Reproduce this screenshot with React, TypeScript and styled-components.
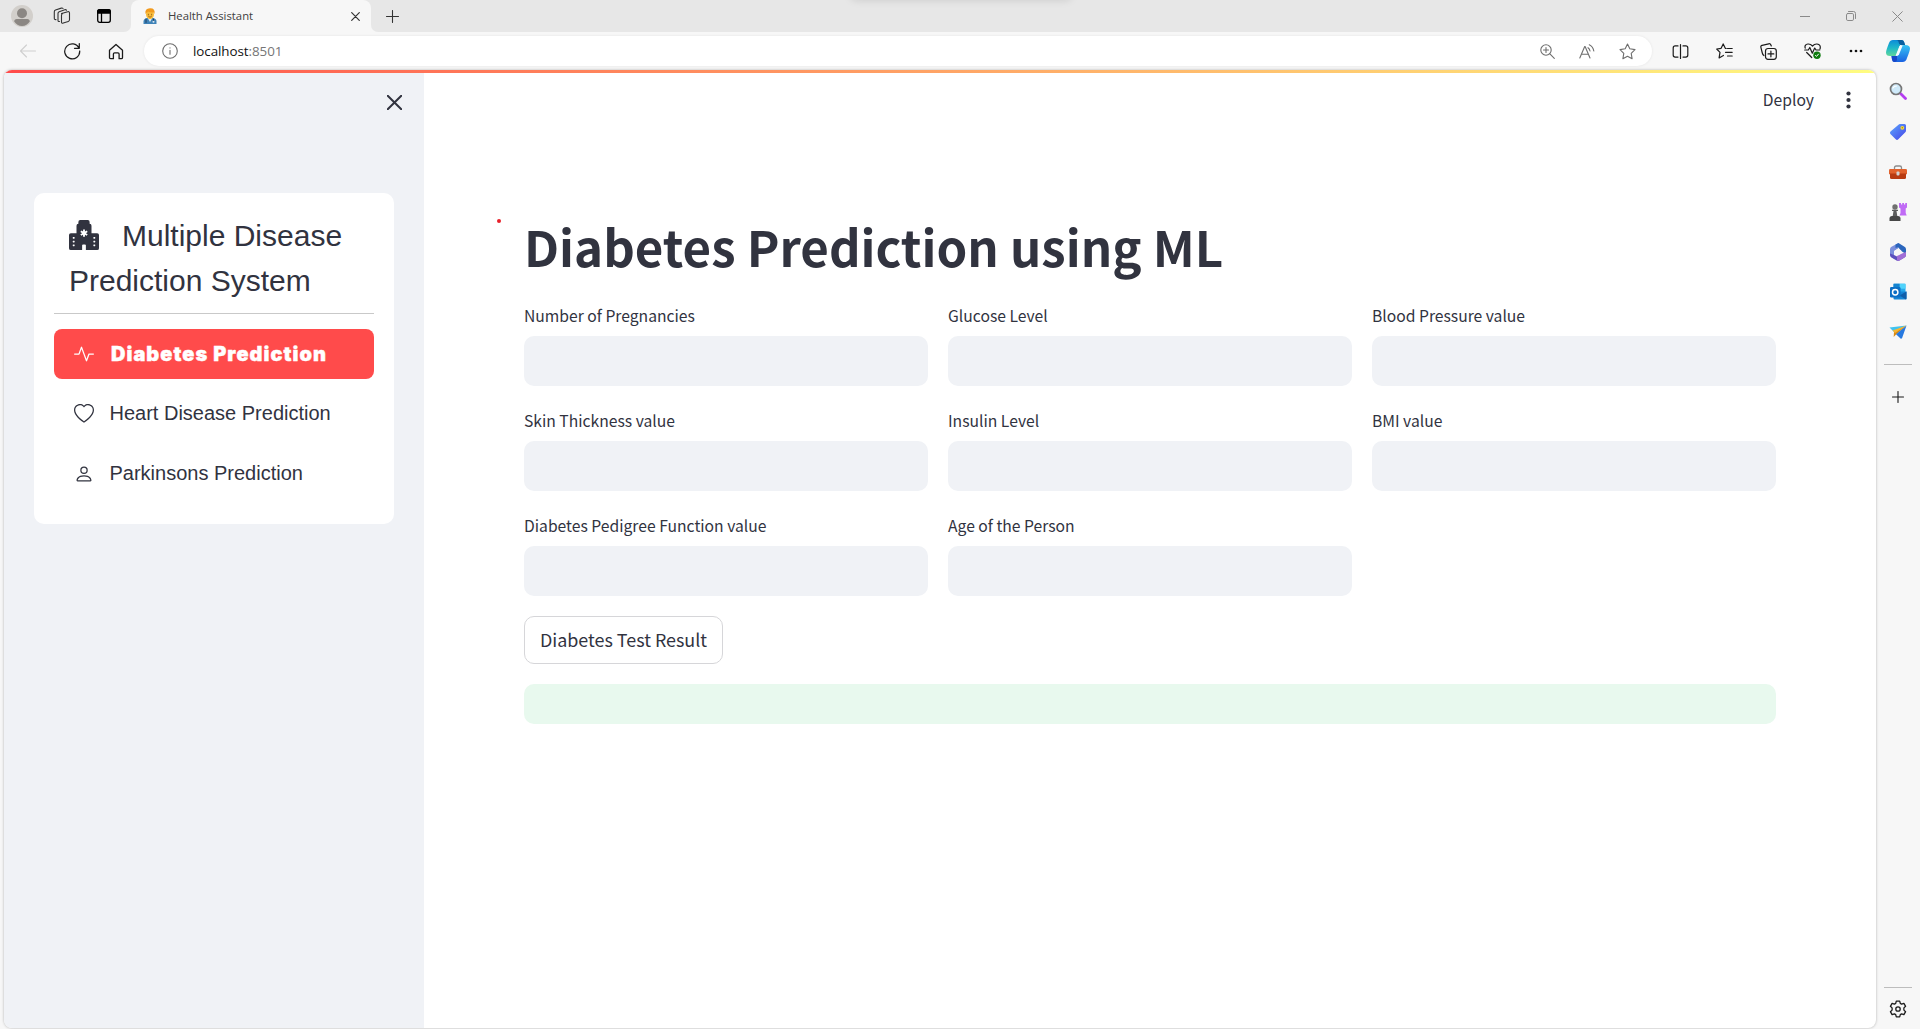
import React from "react";
import styled, { createGlobalStyle } from "styled-components";
import { BsActivity, BsHeart, BsHospitalFill, BsPerson } from "react-icons/bs";

const SANS = `"Noto Sans CJK SC", "Noto Sans", sans-serif`;
const SYSTEM = `"Open Sans", "Noto Sans", sans-serif`;
const ARIAL = `"Liberation Sans", Arial, sans-serif`;

const GlobalStyle = createGlobalStyle`
  *, *::before, *::after { box-sizing: border-box; }
  html, body { margin: 0; height: 100%; background: #f7f7f7; overflow: hidden; }
  button, input { font: inherit; }
`;

/* ---------- browser frame ---------- */

const Window = styled.div`
  display: flex;
  flex-direction: column;
  width: 100vw;
  height: 100vh;
  background: #f7f7f7;
  font-family: ${SYSTEM};
  overflow: hidden;
`;

const TabStrip = styled.header`
  display: flex;
  height: 32px;
  flex: none;
`;

const StripStart = styled.div`
  display: flex;
  align-items: center;
  width: 131px;
  background: #e7e7e7;
  border-bottom-right-radius: 7px;
`;

const StripEnd = styled.div`
  position: relative;
  display: flex;
  flex: 1;
  align-items: center;
  background: #e7e7e7;
  border-bottom-left-radius: 7px;
  overflow: hidden;
`;

const TopShadow = styled.div`
  position: absolute;
  top: -11px;
  left: 481px;
  width: 218px;
  height: 10px;
  border-radius: 4px;
  box-shadow: 0 0 8px 1px rgba(0, 0, 0, 0.13);
`;

const TabSlot = styled.div`
  width: 240px;
  background: linear-gradient(#e7e7e7 50%, #f7f7f7 50%);
`;

const Tab = styled.div`
  display: flex;
  align-items: center;
  height: 32px;
  padding: 0 8px 0 12px;
  border-radius: 8px 8px 0 0;
  background: #f7f7f7;
`;

const TabTitle = styled.span`
  flex: 1;
  margin-left: 11px;
  font-size: 11.3px;
  line-height: 16px;
  color: #404040;
  white-space: nowrap;
`;

const Slot = styled.span<{ $w?: number; $h?: number }>`
  display: flex;
  flex: none;
  align-items: center;
  justify-content: center;
  width: ${({ $w = 44 }) => $w}px;
  height: ${({ $h = 32 }) => $h}px;
`;

const Grow = styled.div`
  flex: 1;
`;

const Toolbar = styled.div`
  display: flex;
  flex: none;
  align-items: center;
  height: 38px;
  padding: 0 2px 0 6px;
`;

const AddressBar = styled.div`
  display: flex;
  flex: 1;
  align-items: center;
  height: 30px;
  margin: 0 6px;
  padding: 0 5px 0 6px;
  border-radius: 15px;
  background: #fff;
  box-shadow: 0 0 3px rgba(0, 0, 0, 0.08);
`;

const Address = styled.span`
  flex: 1;
  margin-left: 3px;
  font-size: 13.4px;
  line-height: 20px;
  letter-spacing: -0.06px;
  color: #111;
`;

const Port = styled.span`
  color: #767676;
`;

const Body = styled.div`
  display: flex;
  flex: 1;
  min-height: 0;
`;

const Rail = styled.aside`
  display: flex;
  flex-direction: column;
  align-items: center;
  width: 44px;
  padding: 2px 1px 0 0;
`;

const RailRule = styled.div<{ $top: number }>`
  width: 28px;
  height: 1px;
  margin-top: ${({ $top }) => $top}px;
  background: #bdbdbd;
`;

/* ---------- page ---------- */

const Page = styled.div`
  position: relative;
  display: flex;
  flex: 1;
  margin: 0 0 1px 4px;
  border-radius: 8px;
  background: #fff;
  box-shadow: 0 0 3px rgba(0, 0, 0, 0.28);
  overflow: hidden;
`;

const Decoration = styled.div`
  position: absolute;
  inset: 0 0 auto;
  height: 3px;
  background: linear-gradient(90deg, #ff4b4b, #fffd80);
`;

const Sidebar = styled.nav`
  width: 420px;
  padding: 22px 30px;
  background: #f0f2f6;
`;

const SidebarTop = styled.div`
  display: flex;
  justify-content: flex-end;
  height: 101px;
`;

const Menu = styled.div`
  height: 331px;
  padding: 20px;
  border-radius: 10px;
  background: #fff;
  font-family: ${ARIAL};
  color: #31333f;
`;

const MenuTitle = styled.div`
  padding: 0 15px;
  height: 100px;
  font-size: 30px;
  line-height: 45px;
  white-space: nowrap;

  svg {
    margin-right: 23px;
    vertical-align: -4px;
  }
`;

const MenuRule = styled.div`
  height: 1px;
  margin-bottom: 15px;
  background: #c9c9c9;
`;

const MenuItem = styled.a<{ $active?: boolean }>`
  display: flex;
  align-items: center;
  gap: ${({ $active }) => ($active ? 17 : 15.5)}px;
  height: 50px;
  margin-bottom: 10px;
  padding: 0 20px ${({ $active }) => ($active ? 0 : 1)}px;
  border-radius: 8px;
  background: ${({ $active }) => ($active ? "#ff4b4b" : "transparent")};
  color: ${({ $active }) => ($active ? "#fff" : "#31333f")};
  font-family: ${({ $active }) => ($active ? `Inter, ${ARIAL}` : ARIAL)};
  font-size: 20px;
  font-weight: ${({ $active }) => ($active ? 900 : 400)};
  letter-spacing: ${({ $active }) => ($active ? "1.02px" : "normal")};
  -webkit-text-stroke: ${({ $active }) => ($active ? "0.4px #fff" : "0")};
  white-space: nowrap;
`;

const Main = styled.main`
  flex: 1;
  font-family: ${SANS};
  color: #31333f;
`;

const AppHeader = styled.div`
  display: flex;
  align-items: center;
  justify-content: flex-end;
  height: 60px;
  padding-right: 25px;
  font-size: 15.65px;
`;

const Deploy = styled.span`
  margin-right: 32px;
  padding-bottom: 2px;
`;

const Content = styled.div`
  padding: 83px 100px 0;
`;

const Title = styled.h1`
  position: relative;
  margin: 0 0 22px;
  font-size: 49.2px;
  font-weight: 700;
  line-height: 66px;
  white-space: nowrap;
`;

const RedDot = styled.span`
  position: absolute;
  left: -27px;
  top: 6px;
  width: 4px;
  height: 4px;
  border-radius: 50%;
  background: #e8202a;
`;

const Fields = styled.div`
  display: grid;
  grid-template-columns: repeat(3, 1fr);
  column-gap: 20px;
  row-gap: 20px;
`;

const Field = styled.label`
  display: flex;
  flex-direction: column;
  height: 85px;
`;

const FieldLabel = styled.span`
  height: 35px;
  font-size: 15.68px;
  line-height: 30px;
`;

const Input = styled.input`
  width: 100%;
  height: 50px;
  border: 0;
  border-radius: 10px;
  background: #f0f2f6;
  outline: none;
`;

const ResultButton = styled.button`
  display: block;
  width: 199px;
  height: 48px;
  margin: 20px 0;
  padding: 0 0 3px;
  border: 1px solid #d6d6d9;
  border-radius: 10px;
  background: #fff;
  color: #31333f;
  font-size: 17.92px;
  white-space: nowrap;
`;

const Success = styled.div`
  height: 40px;
  border-radius: 10px;
  background: #e8f9ee;
`;

/* ---------- icons ---------- */

type IconProps = { w?: number; h?: number; stroke?: string; sw?: number; children: React.ReactNode };

const Icon = ({ w = 20, h = w, stroke = "#1b1b1b", sw = 1.2, children }: IconProps) => (
  <svg
    width={w}
    height={h}
    viewBox={`0 0 ${w} ${h}`}
    fill="none"
    stroke={stroke}
    strokeWidth={sw}
    strokeLinecap="round"
    strokeLinejoin="round"
  >
    {children}
  </svg>
);

const Avatar = () => (
  <Icon w={22} stroke="none">
    <circle cx="11" cy="11" r="11" fill="#d2cfcb" />
    <circle cx="11" cy="8.2" r="5" fill="#8b8783" />
    <path d="M3.200 16.500c0-1.600 1-2.500 2.500-2.500h10.600c1.500 0 2.500.9 2.500 2.500-1.700 2.700-4.500 4.500-7.800 4.500s-6.100-1.800-7.800-4.500Z" fill="#8b8783" />
  </Icon>
);

const Workspaces = () => (
  <Icon w={18} sw={1.1} stroke="#333">
    <path d="M8.500 6.500 14.800 4.700q1.700-.4 1.700 1.300v6.800q0 1.200-1.200 1.600l-5 1.700q-1.800.6-1.800-1.100V8.300q0-1.400 1.200-1.800Z" />
    <path d="M6.500 14.500q-1.500.3-1.500-1.300V6.500q0-1.400 1.200-1.800l5.600-1.900q1.200-.4 1.700.4" />
    <path d="M3 12.600q-1.700.2-1.700-1.400V4.700q0-1.400 1.200-1.800L8.300 1.100q1.200-.3 1.700.4" />
  </Icon>
);

const VerticalTabs = () => (
  <Icon w={14} stroke="#000" sw={1.3}>
    <rect x=".7" y=".7" width="12.600" height="12.600" rx="2" />
    <path d="M.7 4V2.500Q.7.7 2.500.7h9q1.800 0 1.800 1.800V4Z" fill="#000" />
    <path d="M4.500 4v9.300" />
  </Icon>
);

const Doctor = () => (
  <Icon w={14} h={16} stroke="none">
    <path d="M.5 16v-2.500Q.5 10.500 4 10h6q3.500.5 3.500 3.500V16Z" fill="#3f83b8" />
    <path d="m4.700 10 2.300 4 2.300-4Z" fill="#e8f1f5" />
    <ellipse cx="7" cy="6.500" rx="4" ry="4.700" fill="#f9bd3b" />
    <path d="M2.500 6Q1.500.5 7 .3T11.500 6l-1-1.500Q7 4.500 5 3.500L3.500 5Z" fill="#f29a1d" />
    <path d="M5.400 6.200v.8M8.600 6.200v.8M5.700 8.800q1.300.8 2.600 0" stroke="#7a4a12" strokeWidth=".7" />
    <path d="M3 11v3.500M10.500 11v2" stroke="#203f63" strokeWidth="1" />
    <circle cx="10.500" cy="13.800" r="1" fill="#d9e5ee" />
  </Icon>
);

const Cross = ({ size = 9, stroke = "#333", sw = 1.2 }) => (
  <Icon w={size} stroke={stroke} sw={sw}>
    <path d={`M.7.7 ${size - 0.7} ${size - 0.7}M${size - 0.7}.7.7 ${size - 0.7}`} />
  </Icon>
);

const Plus = ({ size = 13, stroke = "#333" }) => (
  <Icon w={size} stroke={stroke} sw={1.1}>
    <path d={`M${size / 2} .5V${size - 0.5}M.5 ${size / 2}H${size - 0.5}`} />
  </Icon>
);

const Restore = () => (
  <Icon w={10} stroke="#8a8a8a" sw={1}>
    <rect x=".5" y="2.500" width="7" height="7" rx="1.300" />
    <path d="M2.500.5H7.500q2 0 2 2v5" />
  </Icon>
);

const Back = () => (
  <Icon w={18} h={14} stroke="#cfcfcf" sw={1.1}>
    <path d="M7.500 1 1.500 7l6 6M1.700 7H16.500" />
  </Icon>
);

const Refresh = () => (
  <Icon w={18} stroke="#1b1b1b" sw={1.25}>
    <path d="M16 6.200A7.500 7.500 0 1 0 16.700 9M16.300 1.500v4.800h-4.800" />
  </Icon>
);

const Home = () => (
  <Icon w={16} h={17} sw={1.3}>
    <path d="M1.500 7.300 8 1.500l6.500 5.800v7.200q0 1.200-1.200 1.200h-2.200V11q0-1.200-1.200-1.200H6.600q-1.200 0-1.200 1.200v4.700H2.700q-1.200 0-1.200-1.200Z" />
  </Icon>
);

const Info = () => (
  <Icon w={16} stroke="#6e6e6e" sw={1.1}>
    <circle cx="8" cy="8" r="7.300" />
    <path d="M8 7.300v4M8 4.800v.1" />
  </Icon>
);

const ZoomIn = () => (
  <Icon w={15} stroke="#6e6e6e" sw={1.1}>
    <circle cx="6" cy="6" r="5.200" />
    <path d="m9.900 9.900 4.400 4.400M6 3.500v5M3.500 6h5" />
  </Icon>
);

const ReadAloud = () => (
  <Icon w={16} h={15} stroke="#6e6e6e" sw={1.1}>
    <path d="M.8 14 5.700 2.500h.4L11 14M2.500 10.200h6.800M9 3.700q1.700 1 2 3.300M10.300.8q3.800 1.900 4.500 6.200" />
  </Icon>
);

const Star = () => (
  <Icon w={17} stroke="#6e6e6e" sw={1.1}>
    <path d="m8.500 1 2.300 4.800 5.200.8-3.800 3.700.9 5.400-4.600-2.500-4.600 2.500.9-5.400L1 6.600l5.200-.8Z" />
  </Icon>
);

const SplitScreen = () => (
  <Icon w={17} h={15} sw={1.2}>
    <path d="M8.500.6v13.800M6 1.900H3.200Q1.200 1.900 1.200 3.900v7.200q0 2 2 2H6M11 1.900h2.800q2 0 2 2v7.200q0 2-2 2H11" />
  </Icon>
);

const Favorites = () => (
  <Icon w={17} h={16} sw={1.2}>
    <path d="M10.300 5.500 9.300 5.300 7.200.9 5.100 5.300.7 6 4 9.300l-.9 5.600 4.300-2.500M11.500 5.500h4.700M9.500 9.300h6.700M11.500 13h4.700" />
  </Icon>
);

const Collections = () => (
  <Icon w={17} sw={1.2}>
    <rect x="5.500" y="5.500" width="10.800" height="10.800" rx="2.500" />
    <path d="M10.900 8v5.800M8 10.900h5.800M3.900 12.500Q2.700 11.700 2.300 10L.9 4.300q-.4-1.600 1.200-2L8.700.8q1.600-.4 2.200 1.200l.4 1" />
  </Icon>
);

const Essentials = () => (
  <Icon w={17} h={16} sw={1.2}>
    <path d="M1.200 5.200Q.2 1.500 4 1q2.500-.2 4.500 2 2-2.200 4.500-2 4.200.5 3 5M2.700 9.500l5 5M.7 7h3.600l1.500-2.500 2.500 5.700L10.700 5 12 7h3.700" />
    <circle cx="13" cy="12.200" r="3.700" fill="#107c10" stroke="none" />
    <path d="m11.500 12.500 1 .9 2-2.300" stroke="#fff" strokeWidth="1" />
  </Icon>
);

const Dots = () => (
  <Icon w={14} h={4} stroke="none">
    {[2, 7, 12].map((x) => (
      <circle key={x} cx={x} cy="2" r="1.350" fill="#111" />
    ))}
  </Icon>
);

const Copilot = () => (
  <Icon w={24} stroke="none">
    <defs>
      <linearGradient id="cpA" x1="0" y1="0" x2="0" y2="1">
        <stop offset="0" stopColor="#0c8bd9" />
        <stop offset=".5" stopColor="#1fb8c8" />
        <stop offset="1" stopColor="#5fd79b" />
      </linearGradient>
      <linearGradient id="cpB" x1="0" y1="0" x2="0" y2="1">
        <stop offset="0" stopColor="#35c4f4" />
        <stop offset="1" stopColor="#1a62e2" />
      </linearGradient>
    </defs>
    <path d="M7 1h8.500q2 0 2.600 2l1 3h-5L10 17H4Q0 17 0 13.500q0-2 3-9.500Q4 1 7 1Z" fill="url(#cpA)" />
    <path d="M10 1h5.500q2 0 2.600 2l1 3h-4.500q-2-1-2-3T10 1Z" fill="#0a5f9f" />
    <path d="M18 6q6-.5 6 3.500 0 2-3 9.500Q20 23 16.500 23H8.500Q6.500 23 6 20.500L5.500 17H9q2 0 2.700-2L14 8.500Q15 6 18 6Z" fill="url(#cpB)" />
    <path d="M5.500 17H9q1.500 0 2-1v4q0 3-2.500 3-2 0-2.500-2.500Z" fill="#1747c8" />
    <path d="M13.500 7h3L13 15.500q-.7 1.500-3.500 1.500Z" fill="#f6fbff" />
  </Icon>
);

const Search = () => (
  <Icon w={18} h={20} stroke="none">
    <path d="m11.500 11.500 5 5" stroke="#b43df0" strokeWidth="2.800" />
    <circle cx="7" cy="7" r="5.500" fill="#cfeafa" stroke="#777" strokeWidth="1.700" />
    <path d="M4 6Q5 4 7.500 4" stroke="#fff" strokeWidth="1.200" />
  </Icon>
);

const Tag = () => (
  <Icon w={18} stroke="none">
    <defs>
      <linearGradient id="tagFill" x1="0" y1="0" x2="1" y2="1">
        <stop offset="0" stopColor="#5ca9ff" />
        <stop offset="1" stopColor="#4743e6" />
      </linearGradient>
    </defs>
    <path d="M9.500 1.700Q10 1 11 1h4.500Q17 1 17 2.500v5q0 1-.7 1.700l-7 7.100q-1.300 1.300-2.600 0L1.400 11q-1-1.300.1-2.500Z" fill="url(#tagFill)" />
    <circle cx="13.300" cy="4.800" r="1.900" fill="#fbdc35" />
    <circle cx="13.300" cy="4.800" r=".7" fill="#9c8423" />
  </Icon>
);

const Toolbox = () => (
  <Icon w={18} h={16} stroke="none">
    <path d="M5.500 5.500V3.700Q5.500 2 7.200 2h3.600q1.700 0 1.700 1.700v1.800" stroke="#8c8c8c" strokeWidth="1.300" />
    <rect x="0" y="5" width="18" height="5.500" rx="1.300" fill="#e1622d" />
    <path d="M1 9.500h16v4q0 1.500-1.500 1.500h-13Q1 15 1 13.500Z" fill="#b83b12" />
    <rect x="7.500" y="7.500" width="3" height="4" rx="1" fill="#d3d3d3" />
  </Icon>
);

const Chess = () => (
  <Icon w={18} stroke="none">
    <path d="M10 0h2v1.500h1.200V0h1.800v1.500h1.200V0H18v4.500l-1.300 1V10l1 2.500h-7.200l1-2.500V5.500L10 4.500Z" fill="#c06bf5" />
    <circle cx="6" cy="4" r="2.700" fill="#707070" />
    <path d="M3 6.800h6v1.300H7.500l.8 4.900H3.700l.8-4.900H3Z" fill="#5d5d5d" />
    <path d="M.5 15.500Q.5 13 3 13h6q2.500 0 2.500 2.500V18H.5Z" fill="#474747" />
  </Icon>
);

const Office = () => (
  <Icon w={18} stroke="none">
    <path d="M9.500 0 2.500 3.700Q1 4.600 1 6.300v5.400q0 1.700 1.500 2.600l2.500 1.200V8l4-2.500Z" fill="#7b8fdc" />
    <path d="M1 10.500 5 12l4 2 8-5v3q0 1.700-1.500 2.500l-5 3q-1.500.9-3 0l-5-3Q1 13.500 1 11.700Z" fill="#5b4fbd" />
    <path d="M9.500 0 15.500 3.700Q17 4.600 17 6.300V11l-4-2.500-4-4.300L6.500 5V1.500Z" fill="#2b66bd" />
    <path d="m13 10.500 4-1.500v3q0 1.700-1.500 2.500l-5 3q-1.500.5-2.500 0V13Z" fill="#a06fd6" />
    <path d="m9 5.700 3.200 1.800v3L9 12.300l-3.200-1.800v-3Z" fill="#f7f7f7" />
  </Icon>
);

const Outlook = () => (
  <Icon w={18} stroke="none">
    <rect x="4.500" y=".7" width="12" height="12" rx="1" fill="#28a8ea" />
    <path d="M10.500.7h6v5h-6Z" fill="#50d3fb" />
    <path d="M4.500.7h6v5h-6Z" fill="#1483d0" />
    <path d="M4.500 8.500h13v7q0 1-1 1H5.500q-1 0-1-1Z" fill="#1686d6" />
    <path d="m17.500 8.500-7 4 6.500 4q.5-.3.500-1Z" fill="#115ea9" />
    <rect x="1" y="4" width="10.500" height="10.500" rx="1.200" fill="#0c6fc5" />
    <circle cx="6.200" cy="9.200" r="2.700" stroke="#fff" strokeWidth="1.500" />
  </Icon>
);

const Plane = () => (
  <Icon w={18} h={14} stroke="none">
    <path d="M17.500.5.500 2.500 5 7Z" fill="#3fc3f0" />
    <path d="M17.500.5 5 7l-.3 5 2.300-2.500Z" fill="#d98a12" />
    <path d="M17.500.5 7 9.300l4.500 4.200q1 .6 1.600-.6Z" fill="#2779e0" />
    <path d="M17.500.5 3.500 5.500 6 8Z" fill="#f3b436" />
  </Icon>
);

const Gear = () => (
  <Icon w={18} sw={1.3}>
    <path d="M7.300 1.100h3.400l.6 2.300 1.300.7 2.300-.7 1.700 2.900-1.700 1.600v2.200l1.700 1.600-1.700 2.900-2.300-.7-1.300.7-.6 2.300H7.300l-.6-2.300-1.300-.7-2.300.7-1.700-2.900 1.700-1.600V7.900L1.400 6.300l1.700-2.900 2.300.7 1.300-.7Z" />
    <circle cx="9" cy="9" r="2.200" />
  </Icon>
);

const Kebab = () => (
  <Icon w={5} h={18} stroke="none">
    {[2.5, 9, 15.5].map((y) => (
      <circle key={y} cx="2.500" cy={y} r="2.100" fill="#31333f" />
    ))}
  </Icon>
);

/* ---------- data ---------- */

const fields = [
  "Number of Pregnancies",
  "Glucose Level",
  "Blood Pressure value",
  "Skin Thickness value",
  "Insulin Level",
  "BMI value",
  "Diabetes Pedigree Function value",
  "Age of the Person",
];

const menu = [
  { label: "Diabetes Prediction", icon: BsActivity, active: true },
  { label: "Heart Disease Prediction", icon: BsHeart },
  { label: "Parkinsons Prediction", icon: BsPerson },
];

const railIcons = [Search, Tag, Toolbox, Chess, Office, Outlook, Plane];
const toolIcons = [SplitScreen, Favorites, Collections, Essentials, Dots];

const CloseSlot = styled.span`
  margin: 3px -7px 0 0;
  width: 14px;
  height: 14px;
  line-height: 0;
`;

export default function App() {
  return (
    <Window>
      <GlobalStyle />
      <TabStrip>
        <StripStart>
          <Slot><Avatar /></Slot>
          <Slot $w={36}><Workspaces /></Slot>
          <Slot $w={48}><VerticalTabs /></Slot>
        </StripStart>
        <TabSlot>
          <Tab>
            <Doctor />
            <TabTitle>Health Assistant</TabTitle>
            <Slot $w={16}><Cross /></Slot>
          </Tab>
        </TabSlot>
        <StripEnd>
          <TopShadow />
          <Slot $w={43}><Plus /></Slot>
          <Grow />
          <Slot $w={46}>
            <Icon w={10} h={1} stroke="#8a8a8a" sw={1}><path d="M0 .5h10" /></Icon>
          </Slot>
          <Slot $w={46}><Restore /></Slot>
          <Slot $w={46}><Cross size={11} stroke="#8a8a8a" sw={1} /></Slot>
        </StripEnd>
      </TabStrip>

      <Toolbar>
        <Slot><Back /></Slot>
        <Slot><Refresh /></Slot>
        <Slot><Home /></Slot>
        <AddressBar>
          <Slot $w={40}><Info /></Slot>
          <Address>localhost<Port>:8501</Port></Address>
          <Slot $w={40}><ZoomIn /></Slot>
          <Slot $w={40}><ReadAloud /></Slot>
          <Slot $w={40}><Star /></Slot>
        </AddressBar>
        {toolIcons.map((Tool, i) => (
          <Slot key={i}><Tool /></Slot>
        ))}
        <Slot $w={40}><Copilot /></Slot>
      </Toolbar>

      <Body>
        <Page>
          <Sidebar>
            <SidebarTop>
              <CloseSlot><Cross size={15} stroke="#31333f" sw={2} /></CloseSlot>
            </SidebarTop>
            <Menu>
              <MenuTitle>
                <BsHospitalFill size={30} />
                Multiple Disease
                <br />
                Prediction System
              </MenuTitle>
              <MenuRule />
              {menu.map(({ label, icon: ItemIcon, active }) => (
                <MenuItem key={label} $active={active}>
                  <ItemIcon size={20} />
                  {label}
                </MenuItem>
              ))}
            </Menu>
          </Sidebar>
          <Main>
            <AppHeader>
              <Deploy>Deploy</Deploy>
              <Kebab />
            </AppHeader>
            <Content>
              <Title>
                <RedDot />
                Diabetes Prediction using ML
              </Title>
              <Fields>
                {fields.map((label) => (
                  <Field key={label}>
                    <FieldLabel>{label}</FieldLabel>
                    <Input />
                  </Field>
                ))}
              </Fields>
              <ResultButton>Diabetes Test Result</ResultButton>
              <Success />
            </Content>
          </Main>
          <Decoration />
        </Page>
        <Rail>
          {railIcons.map((RailIcon, i) => (
            <Slot key={i} $w={43} $h={40}><RailIcon /></Slot>
          ))}
          <RailRule $top={12} />
          <Slot $w={43} $h={63}><Plus size={12} stroke="#1b1b1b" /></Slot>
          <Grow />
          <RailRule $top={0} />
          <Slot $h={41}><Gear /></Slot>
        </Rail>
      </Body>
    </Window>
  );
}
